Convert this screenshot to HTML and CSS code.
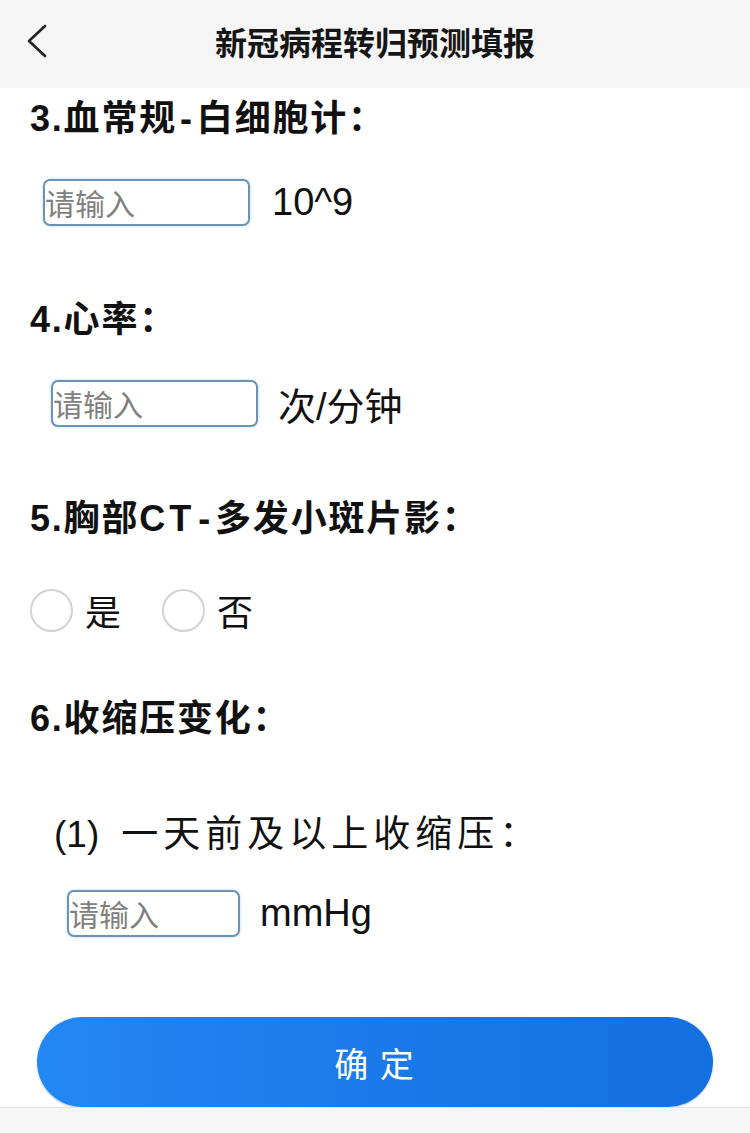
FILE: index.html
```html
<!DOCTYPE html>
<html lang="zh-CN">
<head>
<meta charset="utf-8">
<title>新冠病程转归预测填报</title>
<link rel="stylesheet" href="styles.css">
</head>
<body>
<div class="page">
  <header class="header">
    <div class="back">
      <svg width="22" height="34" viewBox="0 0 22 34" aria-hidden="true">
        <path d="M19 2 L3 17 L19 32" fill="none" stroke="#222" stroke-width="2.6" stroke-linecap="round" stroke-linejoin="round"/>
      </svg>
    </div>
    <h1 class="title">新冠病程转归预测填报</h1>
    <div class="spacer"></div>
  </header>

  <main class="content">
    <section class="q q3">
      <div class="q-title">3.血常规<span class="dash">-</span>白细胞计：</div>
      <div class="row row-in1">
        <input class="field" type="text" placeholder="请输入">
        <span class="unit">10^9</span>
      </div>
    </section>

    <section class="q q4">
      <div class="q-title">4.心率：</div>
      <div class="row row-in2">
        <input class="field" type="text" placeholder="请输入">
        <span class="unit">次/分钟</span>
      </div>
    </section>

    <section class="q q5">
      <div class="q-title">5.胸部<span class="latin">CT</span><span class="dash">-</span>多发小斑片影：</div>
      <div class="row radios">
        <label class="radio"><span class="circle"></span><span class="rlabel">是</span></label>
        <label class="radio"><span class="circle"></span><span class="rlabel">否</span></label>
      </div>
    </section>

    <section class="q q6">
      <div class="q-title">6.收缩压变化：</div>
      <div class="sub-title"><span class="num">(1)</span>一天前及以上收缩压：</div>
      <div class="row row-in3">
        <input class="field field-short" type="text" placeholder="请输入">
        <span class="unit">mmHg</span>
      </div>
    </section>
  </main>

  <div class="actions">
    <button class="submit" type="button">确 定</button>
  </div>
  <div class="bottom-bar"></div>
</div>
</body>
</html>
```

FILE: styles.css
```css
* { box-sizing: border-box; }

html, body {
  margin: 0;
  padding: 0;
  background: #ffffff;
}

body {
  font-family: "Noto Sans CJK SC", "Noto Sans", sans-serif;
  color: #111;
}

.page {
  width: 750px;
  height: 1133px;
  overflow: hidden;
  display: flex;
  flex-direction: column;
}

.header {
  height: 88px;
  background: #f5f5f5;
  display: grid;
  grid-template-columns: 1fr auto 1fr;
  align-items: center;
}

.back {
  padding-left: 26px;
  display: flex;
  align-items: center;
  height: 34px;
  margin-top: -6px;
}

.title {
  margin: 0;
  font-size: 32px;
  font-weight: 700;
  color: #151515;
  line-height: 40px;
  margin-top: -6px;
}

.content {
  padding: 6px 0 0 30px;
}

.q-title {
  height: 50px;
  font-family: "Liberation Sans", "Noto Sans CJK SC", sans-serif;
  font-size: 36px;
  font-weight: 700;
  line-height: 50px;
  letter-spacing: 1.8px;
  color: #111;
  white-space: nowrap;
}

.latin {
  letter-spacing: 4px;
}

.dash {
  display: inline-block;
  padding: 0 3px;
}

.row {
  display: flex;
  align-items: center;
  height: 47px;
  margin-top: 35px;
}

.q3 { margin-bottom: 69px; }
.q4 { margin-bottom: 67px; }
.q5 { margin-bottom: 60px; }

.row-in1 { padding-left: 13px; }
.row-in2 { padding-left: 21px; }
.row-in3 { padding-left: 37px; margin-top: 34px; }

.field {
  width: 207px;
  height: 47px;
  border: 2px solid #6b93b5;
  border-radius: 7px;
  box-shadow: 0 0 3px rgba(90, 165, 235, 0.45);
  padding: 0 0 2px 0;
  font-family: "Noto Sans CJK SC", sans-serif;
  font-size: 30px;
  color: #333;
  background: #fff;
  outline: none;
}

.field-short { width: 173px; }

.field::placeholder {
  color: #808080;
}

.unit {
  margin-left: 22px;
  font-family: "Liberation Sans", "Noto Sans CJK SC", sans-serif;
  font-size: 38px;
  color: #111;
}

.row-in2 .unit { margin-left: 20px; }
.row-in3 .unit { margin-left: 20px; }

.radios {
  margin-top: 43px;
  gap: 41px;
}

.radio {
  display: flex;
  align-items: center;
  gap: 12px;
}

.circle {
  width: 43px;
  height: 43px;
  border-radius: 50%;
  border: 2px solid #d2d2d2;
  background: #fff;
}

.rlabel {
  font-size: 36px;
  line-height: 47px;
  color: #111;
}

.sub-title {
  height: 50px;
  margin-top: 62px;
  padding-left: 24px;
  font-size: 37px;
  line-height: 50px;
  letter-spacing: 5px;
  color: #111;
  white-space: nowrap;
}

.num {
  font-family: "Liberation Sans", sans-serif;
  letter-spacing: 0;
  margin-right: 22px;
  line-height: 1;
}

.actions {
  padding: 0 37px;
  margin-top: 80px;
}

.submit {
  display: block;
  width: 676px;
  height: 90px;
  border: none;
  border-radius: 45px;
  background: linear-gradient(90deg, #2387f4 0%, #1a7ae9 50%, #1470de 100%);
  box-shadow: 0 1px 2px rgba(20, 90, 180, 0.35);
  color: #fff;
  font-family: "Noto Sans CJK SC", sans-serif;
  font-size: 34px;
  letter-spacing: 2px;
}

.bottom-bar {
  flex: 1;
  background: #f5f5f5;
  border-top: 1px solid #e3e3e3;
}
```
